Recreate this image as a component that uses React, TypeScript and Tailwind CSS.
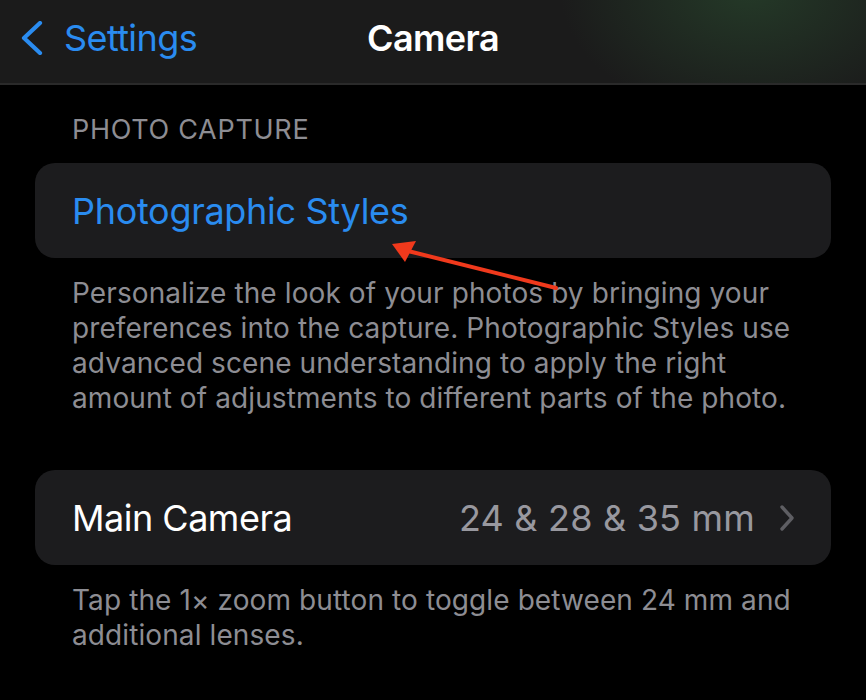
import React from "react";

export default function App() {
  const font = { fontFamily: "Inter, 'Noto Sans', sans-serif" };
  return (
    <div className="relative w-[866px] h-[700px] bg-black overflow-hidden" style={font}>
      {/* nav bar */}
      <div className="relative h-[85px] bg-[#1b1b1b] border-b-[2px] border-[#2a2a2a] overflow-hidden">
        <div className="absolute left-[560px] top-[-140px] w-[380px] h-[260px] rounded-full bg-[radial-gradient(closest-side,rgba(40,70,45,0.7),rgba(27,27,27,0))]" />
        <div className="relative h-full grid grid-cols-[1fr_auto_1fr] items-center pb-[7px]">
          <div className="flex items-center pl-[18px] gap-[18px] text-[#2a8cf0]">
            <svg width="28" height="34" viewBox="0 0 28 34" fill="none">
              <path d="M22 2 L6 17 L22 32" stroke="#2a8cf0" strokeWidth="4.2" strokeLinecap="round" strokeLinejoin="round" />
            </svg>
            <span className="text-[36px] tracking-[-0.6px] leading-none">Settings</span>
          </div>
          <div className="text-white text-[36px] font-semibold tracking-[-0.6px] leading-none">Camera</div>
          <div />
        </div>
      </div>

      {/* content */}
      <div className="px-[35px]">
        <div className="pl-[37px] pt-[28px] pb-[16px] text-[27px] leading-[34px] text-[#8d8d93] tracking-[0.7px]">PHOTO CAPTURE</div>
        <div className="h-[95px] rounded-[20px] bg-[#1c1c1e] flex items-center pl-[37px]">
          <span className="text-[36px] text-[#2a8cf0] tracking-[-0.3px]">Photographic Styles</span>
        </div>
        <div className="pl-[37px] pr-[20px] pt-[18px] text-[28px] leading-[35px] text-[#8d8d93] tracking-[0.1px]">
          Personalize the look of your photos by bringing your preferences into the capture. Photographic Styles use advanced scene understanding to apply the right amount of adjustments to different parts of the photo.
        </div>
        <div className="mt-[54px] h-[95px] rounded-[20px] bg-[#1c1c1e] flex items-center pl-[37px] pr-[36px]">
          <span className="text-[36px] text-white tracking-[-0.5px]">Main Camera</span>
          <span className="ml-auto text-[36px] text-[#98989f] tracking-[0.2px]">24 &amp; 28 &amp; 35 mm</span>
          <svg className="ml-[24px]" width="16" height="28" viewBox="0 0 16 28" fill="none">
            <path d="M3 3 L13 14 L3 25" stroke="#5e5e63" strokeWidth="3.4" strokeLinecap="round" strokeLinejoin="round" />
          </svg>
        </div>
        <div className="pl-[37px] pr-[20px] pt-[18px] text-[28px] leading-[35px] text-[#8d8d93] tracking-[0.1px]">
          Tap the 1× zoom button to toggle between 24 mm and additional lenses.
        </div>
      </div>

      {/* annotation arrow */}
      <svg className="absolute left-0 top-0 pointer-events-none" width="866" height="700">
        <line x1="556" y1="288" x2="408" y2="251" stroke="#f0391c" strokeWidth="4" strokeLinecap="round" />
        <polygon points="392,244 416,241 405,262" fill="#f0391c" />
      </svg>
    </div>
  );
}
